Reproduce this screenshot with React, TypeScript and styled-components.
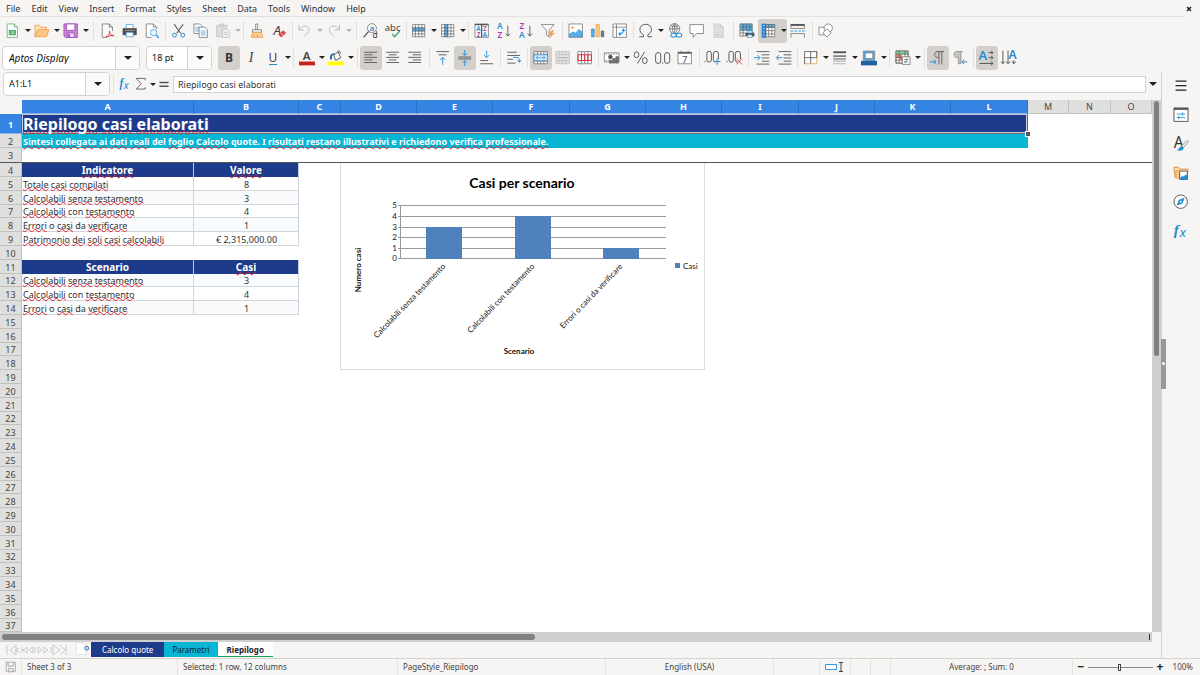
import React, { ReactNode } from "react";
import styled, { createGlobalStyle, css } from "styled-components";

const ink = "#2e3436";
const line = "#d5d3d0";
const chrome = "#f6f5f4";
const navy = "#1e3a8a";
const cyan = "#06b6d4";
const blue = "#1e8bd4";
const grey = "#555";

const GlobalStyle = createGlobalStyle`
  *, *::before, *::after { box-sizing: border-box; }
  body { margin: 0; background: ${chrome}; }
  button, input { font: inherit; color: inherit; margin: 0; }
`;

/* ---------- icons, drawn on a 24 unit grid ---------- */

const T = (p: { x: number; y: number; s: number; c?: string; b?: boolean; children: string }) => (
  <text x={p.x} y={p.y} fontSize={p.s} fill={p.c || grey} stroke="none" textAnchor="middle"
    fontWeight={p.b ? 600 : 400} fontFamily="Noto Sans, sans-serif">{p.children}</text>
);

const gridLines = "M2.500 2.500h19v19h-19zM2.500 7.500h19M2.500 12.500h19M2.500 17h19M7 2.500v19M12 2.500v19M17 2.500v19";

const icons: Record<string, ReactNode> = {
  newDoc: (
    <g stroke="#2f9e4f"><path fill="#fff" d="M3.500 1.500h11l5 5v16h-16z" /><path d="M14.500 1.500v5h5" />
      <path fill="#2f9e4f" d="M6.500 11.500h10v7h-10z" /><path stroke="#cfeed6" d="M7 14h9M7 16.500h9M12 12v6" /></g>
  ),
  open: (
    <g stroke="#e28b35"><path fill="#fde3bd" d="M1.500 21.500v-18h7l2 3h9v4" /><path fill="#fbc986" d="M5.500 10.500h18l-4 11h-18z" /></g>
  ),
  save: (
    <g stroke="#a24fba" strokeWidth="1.400"><path fill="#c887d8" d="M1.500 1.500h21v21h-19l-2-2z" /><path fill="#fff" d="M5.500 1.500h13v10h-13z" />
      <path fill="#f3e3f7" d="M6.500 15.500h11v7h-11z" /><path fill="#8a3fa3" d="M8.500 17.500h2v4h-2z" /></g>
  ),
  pdf: (
    <g><path stroke="none" fill="#fafafa" d="M4 2h10l5 5v15H4z" />
      <path d="M3.500 22.500h7M3.500 22.500v-21h11l5 5v6M14.500 1.500v5h5" /><path stroke="#d9303e" strokeWidth="1.500" d="M9 21.500c4-1 7-5 6-9-1 3 2 7 7 7.500-4-1-9 0-12 2.500" /></g>
  ),
  print: (
    <g><path fill="#fff" stroke={blue} d="M6.500 9v-6.500h11v6.500" /><path fill="#4d4d4d" d="M1.500 8.500h21v10h-21z" />
      <path stroke="#bbb" d="M4 11.500h16" /><path fill="#fff" stroke={blue} d="M6.500 14.500h11v7h-11z" /></g>
  ),
  preview: (
    <g><path fill="#fff" d="M19.500 9.500v-3l-5-5h-11v21h8" /><path d="M14.500 1.500v5h5" />
      <circle cx="15" cy="15" r="5" stroke={blue} fill="#e8f4fc" /><path stroke={blue} strokeWidth="2" d="M19 19l4 4" /></g>
  ),
  cut: (
    <g><path strokeWidth="1.800" d="M5 2l10 14M19 2L9 16" /><circle cx="5.500" cy="19" r="3" stroke={blue} strokeWidth="1.500" /><circle cx="18.500" cy="19" r="3" stroke={blue} strokeWidth="1.500" /></g>
  ),
  copy: (
    <g fill="#fff"><path d="M1.500 1.500h9l4 4v11h-13z" /><path stroke={blue} d="M4 6.500h6M4 9.500h6M4 12.500h6" />
      <path d="M9.500 6.500h9l4 4v12h-13z" /><path stroke={blue} d="M12 12.500h8M12 15.500h8M12 18.500h8" /></g>
  ),
  paste: (
    <g stroke="#b9b9b9" fill="#dcdcdc"><path d="M2.500 3.500h16v18h-16z" /><path d="M7.500 1.500h6v4h-6z" /><path fill="#eee" d="M11.500 9.500h7l4 4v9h-11z" /><path d="M14 15h6M14 18h6" /></g>
  ),
  brush: (
    <g><path fill="#fff" d="M10.500 1.500h3v9h-3z" /><path fill="#fff" d="M5.500 10.500h14v4h-14z" /><path fill="#fcd29c" stroke="#e28b35" d="M5.500 14.500h14l2 8h-18z" /><path stroke="#e28b35" d="M8 18v4M13 18v4" /></g>
  ),
  clear: (
    <g><g fontStyle="italic"><T x={10} y={18} s={21} c="#444">A</T></g><path fill="#e2444f" stroke="#d02f3b" d="M12 18l7-6 4 3.500-7 6.500z" /><path stroke="#fff" d="M15 15.500l4 4" /></g>
  ),
  undo: <path stroke="#bcbcbc" strokeWidth="1.500" d="M3 3v8h8M3.500 10.500C8 3 18 3 19 10c0 4-4 8-8 11" />,
  redo: <path stroke="#bcbcbc" strokeWidth="1.500" d="M21 3v8h-8M20.500 10.500C16 3 6 3 5 10c0 4 4 8 8 11" />,
  find: (
    <g><circle cx="14" cy="8" r="7" /><path strokeWidth="2" d="M9 13l-8 9" /><T x={14} y={12} s={12} c={blue} b>a</T><T x={19} y={24} s={13} c="#333">d</T></g>
  ),
  spell: (
    <g><T x={12} y={12} s={15} c="#444">abc</T><path stroke="#2fa866" strokeWidth="2" d="M11 17l4 4.500 8-9" /></g>
  ),
  row: (<g><path stroke="none" fill="#fff" d="M2 2h19v19H2z" /><path stroke="none" fill="#5db1ea" d="M2 7h20v6H2z" /><path d={gridLines} /></g>),
  col: (<g><path stroke="none" fill="#fff" d="M2 2h19v19H2z" /><path stroke="none" fill="#5db1ea" d="M7 2h6v20H7z" /><path d={gridLines} /></g>),
  sort: (
    <g><path fill="#fff" d="M1.500 1.500h21v21h-21z" /><path strokeWidth="2" d="M1.500 2.500h21M12 2v20" />
      <T x={7} y={13} s={10} c={blue} b>A</T><T x={7} y={22} s={10} c="#a63bb0" b>Z</T><T x={17} y={13} s={10} c="#a63bb0" b>Z</T><T x={17} y={22} s={10} c={blue} b>A</T></g>
  ),
  sortAz: (<g><T x={6} y={10} s={13} c={blue} b>A</T><T x={6} y={23} s={13} c="#a63bb0" b>Z</T><path d="M18.500 4v16M15 16.500l3.500 4 3.500-4" strokeWidth="1.400" /></g>),
  sortZa: (<g><T x={6} y={10} s={13} c="#a63bb0" b>Z</T><T x={6} y={23} s={13} c={blue} b>A</T><path d="M18.500 4v16M15 16.500l3.500 4 3.500-4" strokeWidth="1.400" /></g>),
  filter: (<g><path fill="#fff" d="M2 2.500h20l-8 9v10l-4-3v-7z" /><path fill="#f6b55a" stroke="#e28b35" d="M18 12l-4 6h4l-3 5 7-7h-4l3-4z" /></g>),
  image: (<g><path fill="#fff" d="M1.500 1.500h21v21h-21z" /><circle cx="7" cy="7" r="2" fill="#f6a53a" stroke="none" /><path stroke={blue} fill="#5db1ea" d="M2 21v-3l6-4 4 2 5-6 5 4v7z" /></g>),
  chart: (<g><path fill="#5db1ea" stroke="#1c6fae" d="M2.500 9.500h4v12h-4z" /><path fill="#fbc986" stroke="#e28b35" d="M9.500 2.500h5v19h-5z" /><path fill="#777" d="M17.500 12.500h4v9h-4z" /></g>),
  pivot: (<g><path fill="#fff" d="M1.500 1.500h21v21h-21zM7 2v20M2 6.500h20" /><path stroke={blue} strokeWidth="1.600" d="M11 17c4 1 7-2 7-6M15.500 12.500l2.500-3 2.500 3M13.500 14.500l-3 2.500 3 2.500" /></g>),
  omega: <path strokeWidth="1.500" d="M2 21.500h6.500v-3C4 16 3 13 3 10c0-5 4-8 9-8s9 3 9 8c0 3-1 6-5.500 8.500v3H22" />,
  link: (<g><circle cx="12" cy="9" r="8" /><path d="M4 9h16M12 1v16M6 4c4 2 8 2 12 0M12 1c-5 4-5 12 0 16M12 1c5 4 5 12 0 16" /><rect x="6" y="16" width="9" height="6" rx="3" stroke={blue} fill={chrome} strokeWidth="1.600" /><rect x="14" y="16" width="9" height="6" rx="3" stroke={blue} strokeWidth="1.600" /></g>),
  comment: <path fill="#fff" d="M1.500 2.500h21v14h-11l-5 6v-6h-5z" />,
  header: (<g stroke="#c4c4c4" fill="#dedede"><path d="M4.500 1.500h10l5 5v16h-15z" /><path d="M14.500 1.500v5h5M7 18.500h10" /></g>),
  printArea: (
    <g><path stroke="none" fill="#5db1ea" d="M2 1h19v11H2z" /><path d="M1.500 1.500h19v14M1.500 1.500v19h8M1.500 6h19M1.500 11h19M1.500 15.500h8M6.500 1.500v19M11.500 1.500v10M16.500 1.500v10" /><path fill="#4d4d4d" d="M10.500 15.500h13v5h-13z" /><path stroke={blue} fill="#fff" d="M13.500 12.500h7v3h-7zM13.500 18.500h7v4h-7z" /></g>
  ),
  freeze: (
    <g><path stroke="none" fill="#fff" d="M7 7h15v15H7z" /><path stroke="none" fill="#2a83cc" d="M1 1h7v22H1z" /><path stroke="none" fill="#5db1ea" d="M8 2h14v5H8z" /><path d="M7.500 2.500h14v19h-14zM7.500 7h14M7.500 12h14M7.500 17h14M12 2.500v19M17 2.500v19" /><path stroke="#fff" d="M3 4h3M3 9h3M3 14h3M3 19h3" /></g>
  ),
  split: (<g><path strokeWidth="3" d="M1 3h22" /><path d="M1.500 3v5.500h21V3M1.500 23v-6.500h21V23" /><path stroke={blue} strokeWidth="1.400" strokeDasharray="4 2" d="M1 12.500h22" /></g>),
  shapes: (<g fill="#fff"><path d="M1.500 6.500h12v12h-12z" /><circle cx="16" cy="8" r="6.500" /><path d="M14 9l6.500 6.500L14 22l-6.500-6.500z" /></g>),
  fontColor: (<g><T x={12} y={15} s={18} c="#444" b>A</T><path stroke="none" fill="#c9211e" d="M0 18h25v6H0z" /></g>),
  highlight: (<g><path fill="#fff" strokeWidth="1.500" d="M9 8l7-5 4 9-8 4zM15 4c0-4 5-3 4 2" /><path stroke="#1c6fae" strokeWidth="3" d="M5 15c-1-4-1-9 5-9" /><path stroke="none" fill="#ff0" d="M0 18h25v6H0z" /></g>),
  left: <path strokeWidth="1.400" d="M2 3.500h20M2 7.500h13M2 11.500h20M2 15.500h13M2 19.500h20" />,
  center: <path strokeWidth="1.400" d="M2 3.500h20M6 7.500h12M2 11.500h20M6 15.500h12M2 19.500h20" />,
  right: <path strokeWidth="1.400" d="M2 3.500h20M9 7.500h13M2 11.500h20M9 15.500h13M2 19.500h20" />,
  top: (<g strokeWidth="1.400"><path d="M2 2.500h20M6 7.500h12" /><path stroke={blue} d="M12 23V12M8 15.500l4-4 4 4" /></g>),
  middle: (<g strokeWidth="1.400"><path d="M2 11h20M2 14h20" /><path stroke={blue} d="M12 0v8M8.500 5l3.500 3.500L15.500 5M12 25v-8M8.500 20l3.500-3.500 3.500 3.500" /></g>),
  bottom: (<g strokeWidth="1.400"><path d="M2 16.500h12M2 21.500h20" /><path stroke={blue} d="M12 1v10M8 8l4 4 4-4" /></g>),
  wrap: (<g strokeWidth="1.400"><path d="M2 3.500h15M2 8.500h20M2 14.500h9M2 20.500h13" /><path stroke={blue} d="M11 11.500h6c3 0 4 2 4 7M17.500 15.500l3.500 4 2-4" /></g>),
  merge: (<g><path fill="#fff" d="M1.500 2.500h21v19h-21zM1.500 6.500h21M1.500 17.500h21M7 2.500v4M12 2.500v4M17 2.500v4M7 17.500v4M12 17.500v4M17 17.500v4" /><path stroke={blue} fill="#d6ecfb" d="M1.500 7.500h21v9h-21z" /><path stroke={blue} d="M5 12h14M8 9.500L5 12l3 2.500M16 9.500l3 2.500-3 2.500" /></g>),
  mergeOff: (<g stroke="#b5b5b5"><path fill="#e3e3e3" d="M1.500 2.500h21v19h-21zM1.500 7.500h21M1.500 16.500h21M7 2.500v5M12 2.500v5M17 2.500v5M7 16.500v5M12 16.500v5M17 16.500v5" /><path strokeWidth="2" d="M4 12h16" /></g>),
  unmerge: (<g><path fill="#fff" d="M1.500 2.500h21v19h-21zM7 2.500v19M12 2.500v19M17 2.500v19" /><path stroke="#d9303e" strokeWidth="1.600" d="M1.500 7.500h21M1.500 16.500h21M7 8v8M12 8v8M17 8v8M1.500 8v8M22.500 8v8" /></g>),
  currency: (<g><path fill="#fff" d="M.5 4.500h23v14H.5z" /><path strokeDasharray="2 2" d="M2.500 6.500h19M2.500 16h8" /><circle cx="10" cy="11" r="3" fill="#555" /><path fill="#777" d="M13.500 13.500h4v7h-4zM18.500 10.500h4v10h-4zM8.500 16.500h4v4h-4z" /></g>),
  percent: (<g strokeWidth="1.500"><rect x="2" y="3" width="7" height="9" rx="3.500" /><rect x="15" y="12" width="7" height="9" rx="3.500" /><path d="M18 3L7 21" /></g>),
  number: (<g strokeWidth="1.500"><rect x="1" y="4" width="8" height="17" rx="4" /><rect x="15" y="4" width="8" height="17" rx="4" /><path d="M12 19.500v2" /></g>),
  date: (<g><path fill="#fff" d="M1.500 3.500h21v18h-21z" /><path strokeWidth="2.500" d="M1.500 4.500h21" /><path d="M6.500 1v4M17.500 1v4" /><T x={12} y={20} s={15}>7</T></g>),
  decAdd: (<g strokeWidth="1.500"><path d="M0 17v2" /><rect x="3" y="2" width="7" height="17" rx="3.500" /><rect x="13" y="2" width="8" height="17" rx="4" /><path stroke={chrome} strokeWidth="5" d="M19 14v10" /><path stroke={blue} d="M19 13v10M14 18h10" /></g>),
  decDel: (<g strokeWidth="1.500"><path d="M0 17v2" /><rect x="3" y="2" width="7" height="17" rx="3.500" /><rect x="13" y="2" width="8" height="17" rx="4" /><path stroke={chrome} strokeWidth="5" d="M19 14v10" /><path stroke="#e2444f" d="M14.500 13.500l9 9M23.500 13.500l-9 9" /></g>),
  indent: (<g strokeWidth="1.400"><path d="M4 2.500h20M12 7.500h12M12 12.500h12M12 17.500h12M4 22h20" /><path stroke={blue} d="M0 12h9M5.500 8l4 4-4 4" /></g>),
  outdent: (<g strokeWidth="1.400"><path d="M4 2.500h20M12 7.500h12M12 12.500h12M12 17.500h12M4 22h20" /><path stroke={blue} d="M10 12H1M4.500 8l-4 4 4 4" /></g>),
  borders: (<g strokeWidth="1.300"><path fill="#fff" stroke="none" d="M2.500 2.500h19v19h-19z" /><path stroke="#e6a04d" d="M2.500 21.500h19v-19" /><path d="M2.500 22v-19.500h19.500M12 2.500v19M2.500 12h19M21.500 2.500v9" /></g>),
  lines: (<g><path strokeWidth="3" d="M2 3.500h20" /><path strokeWidth="2" d="M2 9.500h20" /><path strokeWidth="1.500" d="M2 14h20" /><path strokeDasharray="3 1" d="M2 17.500h20" /><path strokeDasharray="1.500 1" d="M2 21.500h20" /></g>),
  lineColor: (<g><path fill="#5db1ea" stroke="#777" d="M3.500 1.500h18v15h-18z" /><path fill="#fff" stroke="#555" d="M6.500 4.500h12v9h-12z" /><path stroke="none" fill="#1d63a5" d="M0 17h25v7H0z" /></g>),
  conditional: (<g><path fill="#fff" d="M1.500 1.500h19v19h-19z" /><path stroke="none" fill="#7fd39a" d="M2 2h18v5H2z" /><path stroke="none" fill="#ee7b7b" d="M2 7h9v5H2zM7 12h5v4H7z" /><path d="M1.500 1.500h19v19h-19zM1.500 6.500h19M1.500 11.500h19M1.500 16h19M6.500 1.500v19M15.500 1.500v19" /><path fill="#fff" d="M11.500 10.500h12v12h-12z" /><path d="M14 15h7M14 18.500h7M19.500 12.500l-4 8" /></g>),
  ltr: (<g><path fill="#c9c6c2" strokeWidth="1.300" d="M22 2.500h-11c-5 0-5 9 0 9h2M14 2.500v20M18.500 2.500v20" /><path stroke={blue} strokeWidth="1.500" d="M0 18.500h9M6 15l3.500 3.500L6 22" /></g>),
  rtl: (<g><path fill="#c4c4c4" stroke="#888" strokeWidth="1.300" d="M17 2.500H7c-5 0-5 9 0 9h3v10h4v-19" /><path stroke={blue} strokeWidth="1.500" d="M24 18.500h-8M19 15l-3.500 3.500L19 22" /></g>),
  textH: (<g><T x={6} y={16} s={20} c={blue} b>A</T><path strokeWidth="1.500" d="M15 4h7M19 1.500L22 4l-3 2.500M15 12h7M19 9.500l3 2.500-3 2.500M1 21h21M18.500 18l3.500 3-3.500 3" /></g>),
  textV: (<g><T x={18} y={14} s={19} c={blue} b>A</T><path strokeWidth="1.500" d="M3 1v20M0 18l3 3.500L6 18M11 1v20M8 18l3 3.500 3-3.500M20 16v5M17 18l3 3.500 3-3.500" /></g>),
  fx: (<g fontStyle="italic"><text x="1" y="19" fontSize="24" fontWeight="700" fill={blue} stroke="none" fontFamily="Liberation Serif, serif">f</text><text x="10" y="22" fontSize="21" fill={blue} stroke="none" fontFamily="Noto Sans, sans-serif">x</text></g>),
  sigma: <path strokeWidth="1.500" d="M20 6V2.500H4l9 9.500-9 9.500h16V18" />,
  equals: <path strokeWidth="3" d="M3 9.500h19M3 17h19" />,
  menu: <path stroke="#222" strokeWidth="2" d="M4 5h17M4 12h17M4 19h17" />,
  properties: (<g><path fill="#fff" strokeWidth="1.500" d="M1.500 1.500h22v21h-22z" /><path strokeWidth="3" d="M1.500 3h22" /><path stroke={blue} strokeWidth="1.300" d="M6 11h13M6 16.500h13M15 8.500v5M9 14v5" /></g>),
  styles: (<g><T x={9} y={18} s={24} c="#333">A</T><path fill="#fff" d="M22 7l2 2-8 9-3-2z" /><path fill={blue} stroke={blue} d="M13 17c-3 0-3 4-6 5 4 1 9 0 9-3z" /></g>),
  gallery: (<g><path stroke="#e28b35" fill="#fde3bd" strokeWidth="1.500" d="M3.500 20.500l-2-17h7l2 3h13v4" /><path stroke="#e28b35" fill="#fbc986" d="M4.500 8.500h6v12h-6z" /><path fill="#fff" strokeWidth="1.500" d="M10.500 9.500h12v13h-12z" /><path stroke={blue} fill={blue} d="M11 21l4-4 2 2 3-4 2 2v5H11z" /></g>),
  navigator: (<g><circle cx="12" cy="12" r="10.500" fill="#fff" strokeWidth="1.500" /><path fill={blue} stroke={blue} d="M17.500 6.500l-3 8-8 3 3-8z" /><circle cx="12" cy="12" r="1.500" fill="#fff" stroke="none" /></g>),
  addSheet: (<g><path fill="#fff" stroke="#d0d0d0" d="M.5 1.500h13l5 5v16h-18z" /><circle cx="19" cy="11" r="3.500" stroke="#1d63a5" strokeWidth="1.600" fill="#fff" /><path stroke="#7fb0dc" strokeWidth="1.200" d="M19 9v4M17 11h4" /></g>),
  disk: (<g stroke="#8a8a8a" strokeWidth="1.400"><path d="M2.500 2.500h19v19h-19zM6.500 2.500v8h11v-8M7.500 21.500v-6h9v6" /><path stroke="#d9a5a5" d="M5 23h14" /></g>),
};

const Svg = styled.svg`
  display: block;
  flex: none;
  fill: none;
  stroke: ${grey};
  overflow: visible;
`;
const Icon = ({ name, size = 16 }: { name: string; size?: number }) => (
  <Svg width={size} height={size} viewBox="0 0 25 25" aria-hidden="true">{icons[name]}</Svg>
);

/* ---------- chrome ---------- */

const Window = styled.div`
  display: flex;
  flex-direction: column;
  height: 100vh;
  overflow: hidden;
  background: ${chrome};
  color: ${ink};
  font: 9px/12px "Noto Sans", sans-serif;
`;
const MenuRow = styled.header`
  display: flex;
  height: 17px;
`;
const Menus = styled.nav`
  display: flex;
  flex: 1;
  gap: 1px;
  padding-left: 1px;
  border-bottom: 1px solid #e4e2e0;
`;
const PlainButton = styled.button`
  border: 0;
  padding: 0;
  background: none;
  display: flex;
  align-items: center;
  justify-content: center;
`;
const MenuButton = styled(PlainButton)`
  padding: 1px 5px 0;
`;
const CloseButton = styled(PlainButton)`
  width: 16px;
  padding-right: 6px;
`;
const ToolRow = styled.div`
  display: flex;
  align-items: center;
  height: 27px;
  padding-left: 2px;
`;
const ToolButton = styled(PlainButton)<{ $on?: boolean }>`
  width: 22px;
  height: 24px;
  border-radius: 3px;
  background: ${(p) => (p.$on ? "#d3d0cc" : "none")};
`;
const SplitButton = styled.div<{ $on?: boolean }>`
  display: flex;
  align-items: center;
  height: 24px;
  border-radius: 3px;
  background: ${(p) => (p.$on ? "#d3d0cc" : "none")};
`;
const ArrowButton = styled(PlainButton)<{ $off?: boolean; $big?: boolean }>`
  width: 7px;
  height: 24px;
  &::after {
    content: "";
    border: ${(p) => (p.$big ? 4 : 3)}px solid transparent;
    border-top-color: ${(p) => (p.$off ? "#b5b5b5" : "#222")};
    border-bottom: 0;
  }
`;
const Divider = styled.span<{ $size: number }>`
  width: 1px;
  height: 20px;
  margin-left: ${(p) => Math.floor(p.$size / 2)}px;
  margin-right: ${(p) => p.$size - 1 - Math.floor(p.$size / 2)}px;
  background: #e3e1de;
`;
const Combo = styled.div<{ $width: number }>`
  display: flex;
  width: ${(p) => p.$width}px;
  height: 24px;
  border: 1px solid ${line};
  border-radius: 4px;
  background: #fff;
  overflow: hidden;
`;
const ComboInput = styled.input<{ $italic?: boolean }>`
  flex: 1;
  min-width: 0;
  border: 0;
  padding: 0 5px;
  background: none;
  color: #111;
  ${(p) => p.$italic && css`padding-left: 6px; font-style: italic; font-size: 10px;`}
`;
const ComboButton = styled(PlainButton)`
  width: 24px;
  border-left: 1px solid ${line};
  background: #fafaf9;
  &::after {
    content: "";
    border: 4px solid transparent;
    border-top-color: #222;
    border-bottom: 0;
  }
`;
const Letter = styled.span<{ $kind: "b" | "i" | "u" }>`
  font-size: 13px;
  line-height: 16px;
  color: #444;
  ${(p) => p.$kind === "b" && css`font-size: 12px; font-weight: 700; color: #333;`}
  ${(p) => p.$kind === "i" && css`font-style: italic; font-family: "Liberation Serif", serif; font-size: 14px;`}
  ${(p) => p.$kind === "u" && css`line-height: 13px; font-size: 12px; border-bottom: 1px solid ${blue};`}
`;
const Gap = styled.span`
  width: 6px;
`;

type Tool = { icon?: string; label: string; letter?: "b" | "i" | "u"; arrow?: boolean; on?: boolean; off?: boolean; sep?: number };
const sep = (size = 5): Tool => ({ label: "", sep: size });
const t = (icon: string, label: string, extra: Partial<Tool> = {}): Tool => ({ icon, label, ...extra });

const standardTools: Tool[] = [
  t("newDoc", "New", { arrow: true }), t("open", "Open", { arrow: true }), t("save", "Save", { arrow: true }), sep(8),
  t("pdf", "Export as PDF"), t("print", "Print"), t("preview", "Print Preview"), sep(),
  t("cut", "Cut"), t("copy", "Copy"), t("paste", "Paste", { arrow: true, off: true }), sep(),
  t("brush", "Clone Formatting"), t("clear", "Clear Direct Formatting"), sep(4),
  t("undo", "Undo", { arrow: true, off: true }), t("redo", "Redo", { arrow: true, off: true }), sep(8),
  t("find", "Find and Replace"), t("spell", "Spelling"), sep(4),
  t("row", "Row", { arrow: true }), t("col", "Column", { arrow: true }), sep(),
  t("sort", "Sort"), t("sortAz", "Sort Ascending"), t("sortZa", "Sort Descending"), t("filter", "AutoFilter"), sep(6),
  t("image", "Insert Image"), t("chart", "Insert Chart"), t("pivot", "Pivot Table"), sep(4),
  t("omega", "Special Character", { arrow: true }), t("link", "Hyperlink"), t("comment", "Comment"), t("header", "Headers and Footers"), sep(6),
  t("printArea", "Define Print Area"), t("freeze", "Freeze Rows and Columns", { arrow: true, on: true }), t("split", "Split Window"), sep(6),
  t("shapes", "Draw Functions"),
];
const formatTools: Tool[] = [
  { label: "Bold", letter: "b", on: true }, { label: "Italic", letter: "i" }, { label: "Underline", letter: "u", arrow: true }, sep(),
  t("fontColor", "Font Color", { arrow: true }), t("highlight", "Background Color", { arrow: true }), sep(6),
  t("left", "Align Left", { on: true }), t("center", "Center"), t("right", "Align Right"), sep(6),
  t("top", "Align Top"), t("middle", "Center Vertically", { on: true }), t("bottom", "Align Bottom"), sep(),
  t("wrap", "Wrap Text"), sep(),
  t("merge", "Merge and Center", { on: true }), t("mergeOff", "Merge Cells"), t("unmerge", "Unmerge Cells"), sep(),
  t("currency", "Currency", { arrow: true }), t("percent", "Percent"), t("number", "Number"), t("date", "Date"), sep(6),
  t("decAdd", "Add Decimal Place"), t("decDel", "Delete Decimal Place"), sep(),
  t("indent", "Increase Indent"), t("outdent", "Decrease Indent"), sep(),
  t("borders", "Borders", { arrow: true }), t("lines", "Border Style", { arrow: true }), t("lineColor", "Border Color", { arrow: true }), sep(),
  t("conditional", "Conditional Formatting", { arrow: true }), sep(6),
  t("ltr", "Left-To-Right", { on: true }), t("rtl", "Right-To-Left"), sep(),
  t("textH", "Text direction horizontal", { on: true }), t("textV", "Text direction vertical"),
];

const Tools = ({ items }: { items: Tool[] }) => (
  <>
    {items.map((it, i) => {
      if (it.sep) return <Divider key={i} $size={it.sep} />;
      const face = it.letter ? <Letter $kind={it.letter}>{it.letter.toUpperCase()}</Letter> : <Icon name={it.icon!} />;
      const main = <ToolButton type="button" aria-label={it.label} $on={it.on}>{face}</ToolButton>;
      return it.arrow ? (
        <SplitButton key={i} $on={it.on}>
          {main}
          <ArrowButton type="button" aria-label={`${it.label} options`} $off={it.off} />
        </SplitButton>
      ) : <React.Fragment key={i}>{main}</React.Fragment>;
    })}
  </>
);

/* ---------- work area ---------- */

const Body = styled.div`
  display: flex;
  flex: 1;
  min-height: 0;
`;
const Work = styled.main`
  display: flex;
  flex-direction: column;
  flex: 1;
  min-width: 0;
`;
const FormulaBar = styled.div`
  display: flex;
  align-items: center;
  flex: none;
  height: 29px;
  padding: 0 5px 3px 3px;
`;
const FormulaInput = styled.input`
  flex: 1;
  min-width: 0;
  height: 17px;
  margin: 0 3px 0 1px;
  padding: 0 4px;
  border: 1px solid ${line};
  background: #fff;
`;
const SmallButton = styled(PlainButton)`
  width: 16px;
  height: 20px;
`;
const AddButton = styled(PlainButton)`
  width: 16px;
  height: 14px;
`;
const SheetArea = styled.div`
  display: flex;
  flex: 1;
  min-height: 0;
`;
const Pane = styled.div`
  position: relative;
  flex: 1;
  min-width: 0;
  overflow: hidden;
  background: #fff;
`;
const VTrack = styled.div`
  width: 9px;
  padding: 1px 1px 0 2px;
  background: #cfcfcf;
`;
const VThumb = styled.div`
  width: 5px;
  height: 48%;
  border-radius: 3px;
  background: #7f8180;
`;
const HTrack = styled.div`
  flex: none;
  height: 10px;
  margin-right: 9px;
  padding: 2px 2px;
  display: flex;
  justify-content: space-between;
  background: #cfcfcf;
`;
const HThumb = styled.div`
  width: calc(46% + 5px);
  border-radius: 3px;
  height: 6px;
  background: #7f8180;
`;
const HGrip = styled.div`
  width: 1px;
  background: #333;
`;
const Table = styled.table`
  width: 100%;
  table-layout: fixed;
  border-collapse: separate;
  border-spacing: 0;
  tr { height: 14px; }
  tr:nth-child(5n + 8) { height: 13px; }
  td, th { padding: 1px 0 0; line-height: 11px; white-space: nowrap; }
`;
const HeadCell = styled.th<{ $sel?: boolean }>`
  && { padding: 0; line-height: 12px; }
  border-right: 1px solid ${(p) => (p.$sel ? "#2a6fc4" : "#c3c1be")};
  border-bottom: 1px solid ${(p) => (p.$sel ? "#8fb6e8" : "#c3c1be")};
  background: ${(p) => (p.$sel ? "#3584e4" : "#dfdfdd")};
  color: ${(p) => (p.$sel ? "#fff" : "#444")};
  font-weight: ${(p) => (p.$sel ? 700 : 400)};
`;
const RowHead = styled(HeadCell)`
  && { padding-top: 1px; line-height: 11px; }
`;
const Corner = styled.td`
  background: ${chrome};
`;
const FreezeRow = styled.tr`
  && { height: 15px; }
  && > * { border-bottom: 1px solid #555; }
`;
const TitleRow = styled.tr`
  && { height: 20px; }
`;
const TitleCell = styled.td`
  && { padding-left: 1px; line-height: 18px; }
  background: ${navy};
  color: #fff;
  font-size: 16px;
  font-weight: 700;
  border-bottom: 1px solid #666b78;
  border-right: 1px solid #666b78;
  box-shadow: inset 0 0 0 1px #c9ccd6;
`;
const NoteCell = styled.td`
  && { padding-left: 1px; }
  background: ${cyan};
  color: #fff;
  font-weight: 700;
`;
const Caption = styled.th`
  background: ${navy};
  color: #fff;
  font-size: 10px;
  font-weight: 700;
  border-right: 1px solid #c3cbdc;
`;
const DataCell = styled.td<{ $center?: boolean; $tint?: boolean }>`
  && { padding-left: 1px; }
  border-right: 1px solid #cfd6de;
  border-bottom: 1px solid #cfd6de;
  background: ${(p) => (p.$tint ? "#f8fafc" : "#fff")};
  text-align: ${(p) => (p.$center ? "center" : "left")};
  color: #333;
`;
const Typo = styled.span`
  text-decoration: underline wavy #e01b24 1px;
  text-decoration-skip-ink: none;
  text-underline-offset: -1px;
  ${TitleCell} &, ${NoteCell} &, ${Caption} & {
    text-underline-offset: 0px;
  }
`;
const SelectionHandle = styled.span`
  position: absolute;
  left: 1026px;
  top: 32px;
  width: 4px;
  height: 4px;
  background: #555;
  outline: 1px solid #fff;
`;
const ChartFrame = styled.figure`
  position: absolute;
  left: 340px;
  top: 63px;
  width: 365px;
  height: 207px;
  margin: 0;
  border: 1px solid #dcdcdc;
  border-top: 0;
  background: #fff;
`;
const ChartSvg = styled.svg`
  display: block;
  font: 8px Lato, sans-serif;
  fill: #111;
`;

const known = new Set(["o", "con", "da", "e", "I", "del", "quote.", "Scenario"]);
const Spelled = ({ text }: { text: string }) => (
  <>
    {text.split(" ").map((w, i) => (
      <React.Fragment key={i}>
        {i > 0 && " "}
        {known.has(w) ? w : <Typo>{w}</Typo>}
      </React.Fragment>
    ))}
  </>
);

const columns = "ABCDEFGHIJKLMNO".split("");
const widths = [172, 105, 42, 76, 76, 77, 76, 76, 77, 76, 76, 77, 41, 42];
const captions: Record<number, [string, string]> = { 4: ["Indicatore", "Valore"], 11: ["Scenario", "Casi"] };
const data: Record<number, [string, string]> = {
  5: ["Totale casi compilati", "8"],
  6: ["Calcolabili senza testamento", "3"],
  7: ["Calcolabili con testamento", "4"],
  8: ["Errori o casi da verificare", "1"],
  9: ["Patrimonio dei soli casi calcolabili", "€ 2,315,000.00"],
  12: ["Calcolabili senza testamento", "3"],
  13: ["Calcolabili con testamento", "4"],
  14: ["Errori o casi da verificare", "1"],
};

const Sheet = () => (
  <Table>
    <colgroup>
      <col style={{ width: 22 }} />
      {widths.map((w, i) => <col key={i} style={{ width: w }} />)}
      <col />
    </colgroup>
    <tbody>
      <tr>
        <Corner />
        {columns.map((c, i) => <HeadCell key={c} scope="col" $sel={i < 12}>{c}</HeadCell>)}
      </tr>
      <TitleRow>
        <RowHead scope="row" $sel>1</RowHead>
        <TitleCell colSpan={12}><Spelled text="Riepilogo casi elaborati" /></TitleCell>
        <td colSpan={3} />
      </TitleRow>
      <tr>
        <RowHead scope="row">2</RowHead>
        <NoteCell colSpan={12}>
          <Spelled text="Sintesi collegata ai dati reali del foglio Calcolo quote. I risultati restano illustrativi e richiedono verifica professionale." />
        </NoteCell>
        <td colSpan={3} />
      </tr>
      <FreezeRow>
        <RowHead scope="row">3</RowHead>
        <td colSpan={15} />
      </FreezeRow>
      {Array.from({ length: 34 }, (_, k) => k + 4).map((n) => (
        <tr key={n}>
          <RowHead scope="row">{n}</RowHead>
          {captions[n] && captions[n].map((c) => <Caption key={c} scope="col"><Spelled text={c} /></Caption>)}
          {data[n] && (
            <>
              <DataCell $tint={n % 2 === 0}><Spelled text={data[n][0]} /></DataCell>
              <DataCell $center $tint={n % 2 === 0}>{data[n][1]}</DataCell>
            </>
          )}
          <td colSpan={captions[n] || data[n] ? 13 : 15} />
        </tr>
      ))}
    </tbody>
  </Table>
);

const bars = [
  { label: "Calcolabili senza testamento", value: 3, x: 86 },
  { label: "Calcolabili con testamento", value: 4, x: 175 },
  { label: "Errori o casi da verificare", value: 1, x: 263 },
];
const levelY = [95, 85, 74, 64, 53, 42];

const Chart = () => (
  <ChartFrame aria-label="Casi per scenario">
    <ChartSvg width="363" height="206" viewBox="0 0 363 206">
      <text x="181" y="25" fontSize="14" fontWeight="700" textAnchor="middle" fill="#000">Casi per scenario</text>
      {levelY.map((y, v) => (
        <g key={v}>
          <path d={`M57 ${y + 0.5}H325`} stroke="#999" />
          <text x="56" y={y + 3} textAnchor="end">{v}</text>
        </g>
      ))}
      <path d="M59.500 43v53" stroke="#999" />
      {bars.map((b) => (
        <g key={b.label}>
          <rect x={b.x - 1} y={levelY[b.value]} width="36" height={96 - levelY[b.value]} fill="#4f81bd" />
          <text transform={`translate(${b.x + 19} 104) rotate(-46)`} textAnchor="end">{b.label}</text>
        </g>
      ))}
      <text transform="translate(20 107) rotate(-90)" textAnchor="middle" fontWeight="700">Numero casi</text>
      <text x="178" y="191" textAnchor="middle" fontWeight="700">Scenario</text>
      <rect x="334" y="100" width="5" height="5" fill="#4f81bd" />
      <text x="342" y="106">Casi</text>
    </ChartSvg>
  </ChartFrame>
);

/* ---------- sheet tabs, sidebar, status ---------- */

const TabBar = styled.div`
  display: flex;
  flex: none;
  height: 16px;
  font-size: 8px;
`;
const NavArrows = styled(PlainButton)`
  width: 62px;
  margin: 0 8px 0 5px;
`;
const Tab = styled(PlainButton)<{ $bg: string; $fg: string; $pad: number; $current?: boolean }>`
  height: 15px;
  padding: 0 ${(p) => p.$pad}px;
  background: ${(p) => p.$bg};
  color: ${(p) => p.$fg};
  ${(p) => p.$current && css`font-weight: 700; box-shadow: inset 0 -1px #12a150;`}
`;
const Side = styled.aside`
  position: relative;
  display: flex;
  flex-direction: column;
  align-items: center;
  gap: 5px;
  width: 39px;
  padding-top: 3px;
  border-left: 1px solid ${line};
`;
const SideButton = styled(PlainButton)`
  width: 24px;
  height: 24px;
`;
const SideHandle = styled(PlainButton)`
  position: absolute;
  left: -1px;
  top: calc(50% - 26px);
  width: 5px;
  height: 50px;
  background: #999;
  &::after {
    content: "";
    width: 3px;
    height: 3px;
    border-radius: 2px;
    background: #fff;
  }
`;
const Status = styled.footer`
  display: grid;
  grid-template-columns: 21px 156fr 220fr 208fr 168fr 46px 31px 20px 20px 182fr 128px;
  flex: none;
  height: 17px;
  border-top: 1px solid ${line};
  color: #444;
  font-size: 8px;
`;
const StatusCell = styled.div<{ $center?: boolean }>`
  display: flex;
  align-items: center;
  justify-content: ${(p) => (p.$center ? "center" : "flex-start")};
  gap: 2px;
  padding: 0 5px;
  min-width: 0;
  white-space: nowrap;
  & + & { border-left: 1px solid #e6e4e1; }
`;
const Zoom = styled.div`
  display: flex;
  align-items: center;
  gap: 2px;
  padding: 0 7px 0 3px;
  border-left: 1px solid #e6e4e1;
`;
const ZoomStep = styled(PlainButton)`
  width: 10px;
  font-size: 12px;
  font-weight: 700;
  color: #222;
`;
const ZoomValue = styled.span`
  margin-left: auto;
`;
const ZoomSlider = styled.input`
  appearance: none;
  width: 65px;
  height: 1px;
  background: #8a8a8a;
  &::-webkit-slider-thumb {
    appearance: none;
    width: 3px;
    height: 7px;
    border: 1px solid #444;
    background: #fff;
  }
`;

const menus = ["File", "Edit", "View", "Insert", "Format", "Styles", "Sheet", "Data", "Tools", "Window", "Help"];
const sidebar = [["menu", "Sidebar Settings"], ["properties", "Properties"], ["styles", "Styles"], ["gallery", "Gallery"], ["navigator", "Navigator"], ["fx", "Functions"]];

export default function App() {
  return (
    <Window>
      <GlobalStyle />
      <MenuRow>
        <Menus aria-label="Menu bar">
          {menus.map((m) => <MenuButton key={m} type="button">{m}</MenuButton>)}
        </Menus>
        <CloseButton type="button" aria-label="Close document">
          <Svg width="6" height="6" viewBox="0 0 6 6"><path d="M1 1l4 4M5 1L1 5" stroke="#222" strokeWidth="1.500" /></Svg>
        </CloseButton>
      </MenuRow>
      <ToolRow role="toolbar" aria-label="Standard"><Tools items={standardTools} /></ToolRow>
      <ToolRow role="toolbar" aria-label="Formatting">
        <Combo $width={138}>
          <ComboInput aria-label="Font Name" defaultValue="Aptos Display" $italic />
          <ComboButton type="button" aria-label="Choose font" />
        </Combo>
        <Gap />
        <Combo $width={66}>
          <ComboInput aria-label="Font Size" defaultValue="18 pt" />
          <ComboButton type="button" aria-label="Choose size" />
        </Combo>
        <Gap />
        <Tools items={formatTools} />
      </ToolRow>
      <Body>
        <Work>
          <FormulaBar>
            <Combo $width={107}>
              <ComboInput aria-label="Name Box" defaultValue="A1:L1" />
              <ComboButton type="button" aria-label="Named ranges" />
            </Combo>
            <Divider $size={7} />
            <SmallButton type="button" aria-label="Function Wizard"><Icon name="fx" size={12} /></SmallButton>
            <SmallButton type="button" aria-label="Select Function"><Icon name="sigma" size={14} /></SmallButton>
            <ArrowButton type="button" aria-label="Function options" />
            <SmallButton type="button" aria-label="Formula"><Icon name="equals" size={12} /></SmallButton>
            <FormulaInput aria-label="Input line" defaultValue="Riepilogo casi elaborati" />
            <ArrowButton type="button" aria-label="Expand Formula Bar" $big />
          </FormulaBar>
          <SheetArea>
            <Pane>
              <Sheet />
              <SelectionHandle />
              <Chart />
            </Pane>
            <VTrack><VThumb /></VTrack>
          </SheetArea>
          <HTrack><HThumb /><HGrip /></HTrack>
          <TabBar>
            <NavArrows type="button" aria-label="Scroll sheets">
              <Svg width="62" height="12" viewBox="0 0 62 12" stroke="#c9c9c9">
                <path d="M2 1v10M11 1L5 6l6 5zM14 4l-4 2 4 2M17 3v6M22 3l-4 3 4 3zM28 3l-4 3 4 3zM30 3v6M33 3l4 3-4 3zM39 3l4 3-4 3zM46 3v6M48 1l7 5-7 5zM55 1l5 5-5 5M61 1v10" stroke="#c9c9c9" />
              </Svg>
            </NavArrows>
            <AddButton type="button" aria-label="Add sheet"><Icon name="addSheet" size={14} /></AddButton>
            <Tab type="button" $bg={navy} $fg="#fff" $pad={11}>Calcolo quote</Tab>
            <Tab type="button" $bg={cyan} $fg="#123" $pad={8}>Parametri</Tab>
            <Tab type="button" $bg="#fff" $fg="#222" $pad={9} $current>Riepilogo</Tab>
          </TabBar>
        </Work>
        <Side>
          {sidebar.map(([icon, label]) => (
            <SideButton key={icon} type="button" aria-label={label}><Icon name={icon} /></SideButton>
          ))}
          <SideHandle type="button" aria-label="Hide sidebar" />
        </Side>
      </Body>
      <Status>
        <StatusCell><Icon name="disk" size={12} /></StatusCell>
        <StatusCell>Sheet 3 of 3</StatusCell>
        <StatusCell>Selected: 1 row, 12 columns</StatusCell>
        <StatusCell>PageStyle_Riepilogo</StatusCell>
        <StatusCell $center>English (USA)</StatusCell>
        <StatusCell />
        <StatusCell>
          <Svg width="20" height="12" viewBox="0 0 20 12">
            <path d="M.5 3.500h11v5H.5z" stroke="#3a94d4" fill="#fff" />
            <path d="M14 1.500h4M14 10.500h4M16 1.500v9" stroke="#444" />
          </Svg>
        </StatusCell>
        <StatusCell />
        <StatusCell />
        <StatusCell $center>Average: ; Sum: 0</StatusCell>
        <Zoom>
          <ZoomStep type="button" aria-label="Zoom out">−</ZoomStep>
          <ZoomSlider type="range" aria-label="Zoom" min={0} max={100} defaultValue={48} />
          <ZoomStep type="button" aria-label="Zoom in">+</ZoomStep>
          <ZoomValue>100%</ZoomValue>
        </Zoom>
      </Status>
    </Window>
  );
}
